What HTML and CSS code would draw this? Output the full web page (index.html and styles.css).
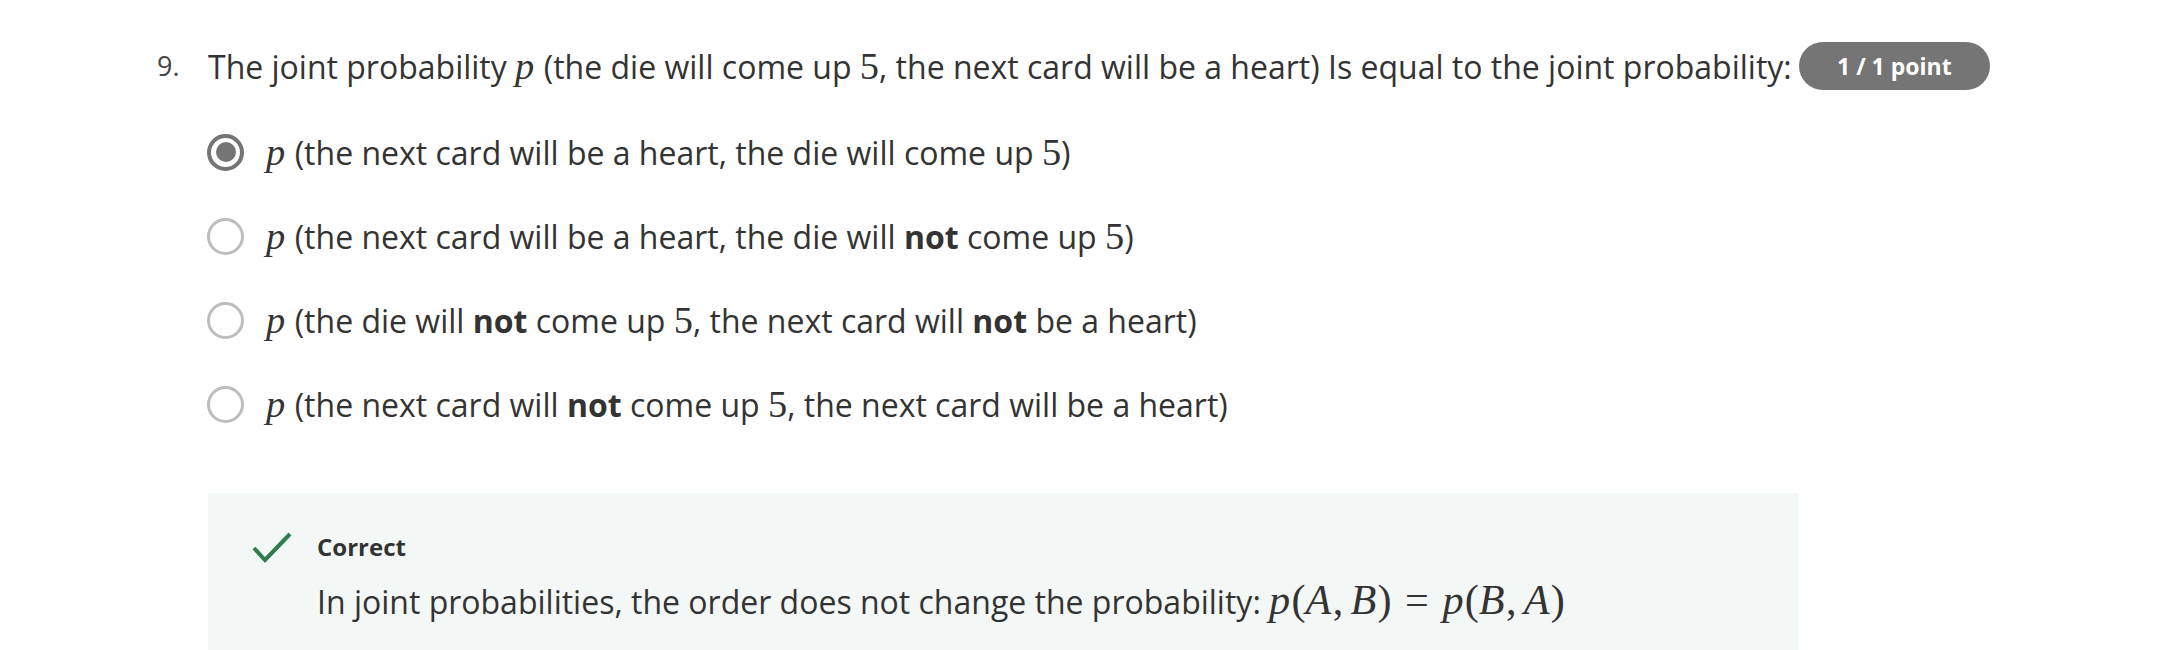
FILE: index.html
```html
<!DOCTYPE html>
<html>
<head>
<meta charset="utf-8">
<link rel="stylesheet" href="styles.css">
</head>
<body>
<div class="question">
  <div class="qnum">9.</div>
  <div class="qbody">
    <div class="qtext">The joint probability <span class="m"><i>p</i></span> (the die will come up <span class="m">5</span>, the next card will be a heart) Is equal to the joint probability:</div>
    <div class="options">
      <div class="opt"><span class="radio checked"></span><span class="otext"><span class="m"><i>p</i></span> (the next card will be a heart, the die will come up <span class="m">5</span>)</span></div>
      <div class="opt"><span class="radio"></span><span class="otext"><span class="m"><i>p</i></span> (the next card will be a heart, the die will <b>not</b> come up <span class="m">5</span>)</span></div>
      <div class="opt"><span class="radio"></span><span class="otext"><span class="m"><i>p</i></span> (the die will <b>not</b> come up <span class="m">5</span>, the next card will <b>not</b> be a heart)</span></div>
      <div class="opt"><span class="radio"></span><span class="otext"><span class="m"><i>p</i></span> (the next card will <b>not</b> come up <span class="m">5</span>, the next card will be a heart)</span></div>
    </div>
    <div class="feedback">
      <div class="fbhead">
        <svg class="check" width="40" height="32" viewBox="0 0 40 32"><path d="M2 17 L13 29 L38 3" fill="none" stroke="#2f7d4f" stroke-width="4"/></svg>
        <span class="fbtitle">Correct</span>
      </div>
      <div class="fbtext">In joint probabilities, the order does not change the probability: <span class="m formula"><i>p</i>(<i>A</i>,<span class="thin"></span><i>B</i>)<span class="rel">=</span><i>p</i>(<i>B</i>,<span class="thin"></span><i>A</i>)</span></div>
    </div>
  </div>
  <div class="qside"><span class="badge">1 / 1 point</span></div>
</div>
</body>
</html>
```
FILE: styles.css
```css
html, body {
  margin: 0;
  padding: 0;
  background: #ffffff;
}
body {
  font-family: "Open Sans", "Noto Sans", sans-serif;
  color: #333333;
}
.question {
  display: flex;
  padding-left: 157px;
  padding-top: 44px;
}
.qnum {
  width: 51px;
  flex: none;
  font-size: 27px;
  line-height: 44px;
  color: #444;
}
.qbody {
  width: 1590px;
  flex: none;
}
.qtext {
  font-size: 32px;
  line-height: 44px;
  white-space: nowrap;
}
.m {
  font-family: "Liberation Serif", "DejaVu Serif", serif;
  font-size: 1.2em;
}
.m i {
  font-style: italic;
  padding-right: 0.03em;
}
.formula {
  font-size: 1.32em;
}
.thin {
  display: inline-block;
  width: 0.17em;
}
.rel {
  padding: 0 0.32em;
}
.options {
  padding-top: 41px;
  display: flex;
  flex-direction: column;
  gap: 40px;
}
.opt {
  display: flex;
  align-items: center;
  height: 44px;
}
.radio {
  box-sizing: border-box;
  width: 37px;
  height: 37px;
  border: 3.5px solid #bdbdbd;
  border-radius: 50%;
  flex: none;
  margin-left: -1px;
  margin-right: 22px;
  position: relative;
}
.radio.checked {
  border-color: #757575;
  border-width: 4px;
}
.radio.checked::after {
  content: "";
  position: absolute;
  left: 4.5px;
  top: 4.5px;
  width: 20px;
  height: 20px;
  border-radius: 50%;
  background: #757575;
}
.otext {
  font-size: 32px;
  line-height: 44px;
  white-space: nowrap;
}
.otext b {
  font-weight: 700;
}
.feedback {
  margin-top: 67px;
  background: #f3f8f6;
  padding: 38px 44px 40px 44px;
  min-height: 200px;
}
.fbhead {
  display: flex;
  align-items: center;
  gap: 25px;
}
.check {
  flex: none;
}
.fbtitle {
  font-size: 24px;
  font-weight: 700;
  line-height: 32px;
}
.fbtext {
  padding-left: 65px;
  margin-top: 15px;
  font-size: 32px;
  line-height: 44px;
  white-space: nowrap;
}
.qside {
  flex: none;
  padding-left: 1px;
}
.badge {
  display: inline-block;
  background: #757575;
  color: #ffffff;
  font-weight: 700;
  font-size: 23px;
  line-height: 48px;
  height: 48px;
  padding: 0 38px;
  border-radius: 24px;
  margin-top: -2px;
  white-space: nowrap;
}
```
